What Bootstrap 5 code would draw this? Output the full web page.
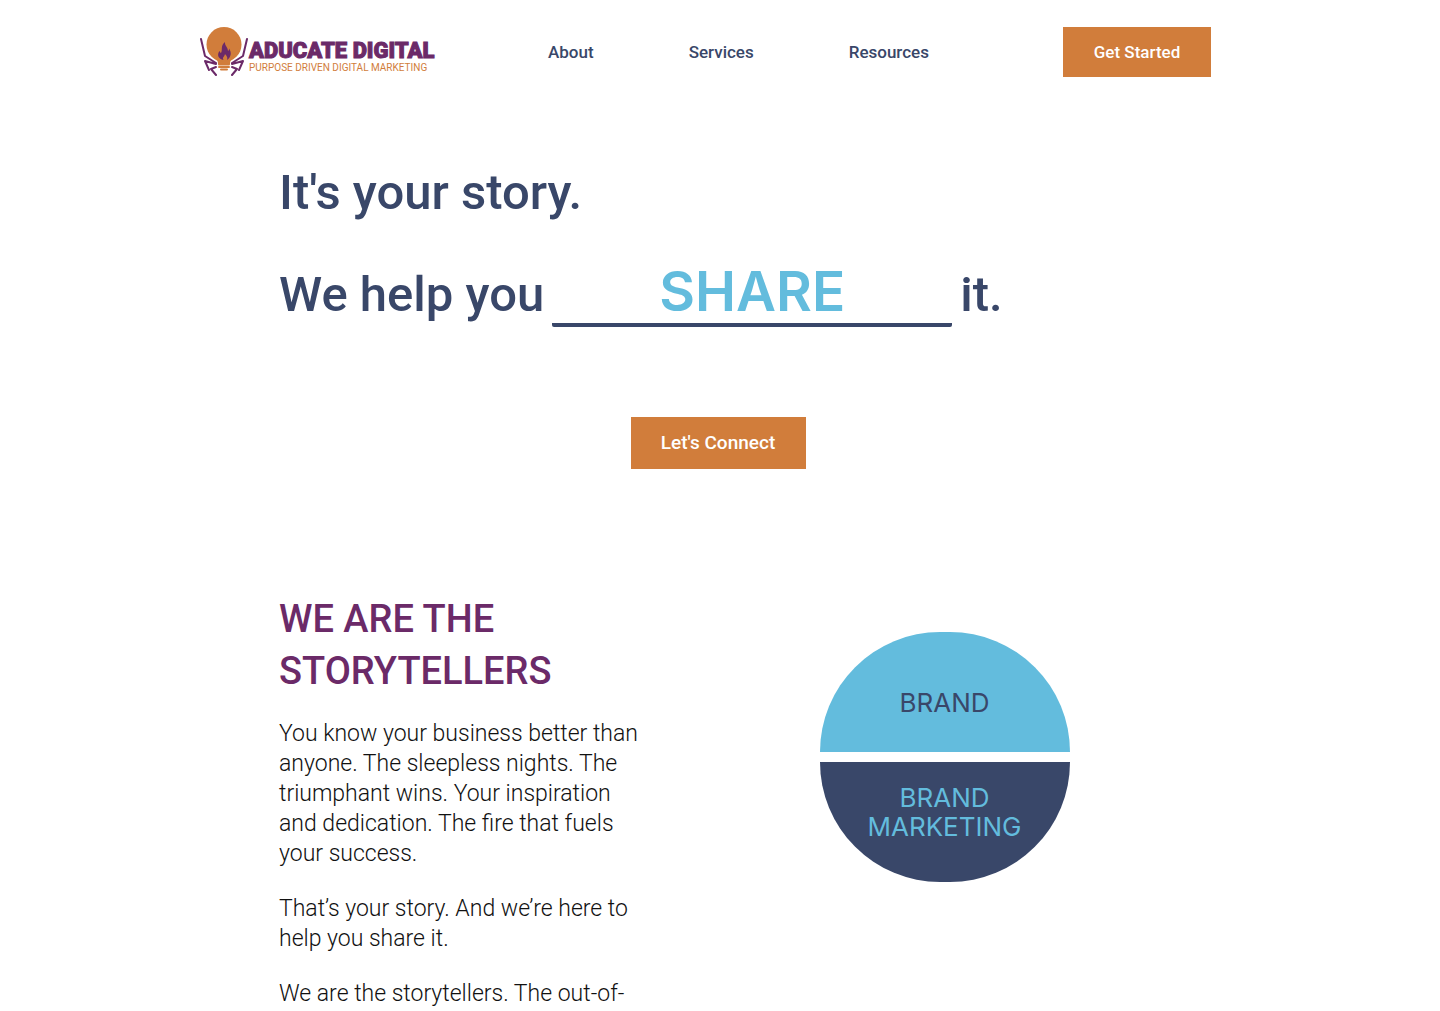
<!DOCTYPE html>
<html lang="en">
<head>
<meta charset="utf-8">
<meta name="viewport" content="width=device-width, initial-scale=1">
<title>Aducate Digital</title>
<link href="https://cdn.jsdelivr.net/npm/bootstrap@5.3.0/dist/css/bootstrap.min.css" rel="stylesheet">
<style>
:root { --navy: #394769; --plum: #6b2a68; --sky: #63bcdd; --copper: #d17d3b; }
body { font-family: Roboto, "Open Sans", sans-serif; color: #111; background: #fff; overflow-x: hidden; }
.site-head { max-width: 1040px; padding: 27px 29px 0 0; }
.site-head .brand-link { width: 238px; }
.brand-link svg { display: block; width: 100%; height: auto; }
.site-menu { gap: 95px; margin-right: 24px; }
.site-menu .nav-link { color: var(--navy); font-size: 17px; font-weight: 500; line-height: 24px; }
.btn-copper { --bs-btn-color: #fff; --bs-btn-bg: var(--copper); --bs-btn-border-width: 0; --bs-btn-hover-color: #fff; --bs-btn-hover-bg: #b96a2c; --bs-btn-border-radius: 0; --bs-btn-font-weight: 500; --bs-btn-padding-x: 30px; --bs-btn-padding-y: 13px; --bs-btn-line-height: 24px; }
.btn-head { --bs-btn-font-size: 17px; min-width: 148px; }
.btn-hero { --bs-btn-font-size: 19px; --bs-btn-padding-y: 14px; min-width: 175px; }
.page-wrap { max-width: 882px; }
.hero { padding-top: 84px; }
.hero h1 { color: var(--navy); font-size: 49px; font-weight: 500; line-height: 64px; }
.hero .fill-line { gap: 8px; margin-top: 36px; }
.fill-line .fill-text { padding-top: 2px; }
.blank { flex: 0 1 400px; border-bottom: 4px solid var(--navy); border-radius: 2px; height: 66px; line-height: 60px; color: var(--sky); font-family: Inter, sans-serif; font-size: 55px; font-weight: 600; }
.hero-action { padding: 90px 4px 124px 0; }
.story-title { color: var(--plum); font-size: 38px; font-weight: 500; line-height: 52px; margin-bottom: 22px; }
.story-copy p { font-size: 23px; font-weight: 300; line-height: 30px; margin-bottom: 25px; }
.story-copy { max-width: 370px; }
.half { width: 250px; height: 120px; font-family: Inter, sans-serif; font-size: 26px; line-height: 29px; }
.half-top { background: var(--sky); color: var(--navy); border-radius: 120px 120px 0 0; padding-top: 20px; }
.half-bottom { background: var(--navy); color: var(--sky); border-radius: 0 0 120px 120px; padding-bottom: 20px; }
.story-figure { gap: 10px; padding-top: 39px; }
</style>
</head>
<body>
<header class="site-head container-fluid d-flex align-items-center justify-content-between">
  <a href="#" class="brand-link" aria-label="Aducate Digital home">
    <svg viewBox="0 0 238 50" role="img" aria-label="Aducate Digital">
      <circle cx="24" cy="17.500" r="17.500" fill="#d17d3b"/>
      <path d="M14 29h20c-3 3-4 5-4 8H18c0-3-1-5-4-8z" fill="#d17d3b"/>
      <path d="M19 37.500h10M19 40h10M21 42.500h6" stroke="#d17d3b" stroke-width="2" stroke-linecap="round"/>
      <path d="M23.500 33c-5-1-7-5-4-9 1 1 .5 2 1.500 2 2-3-1-7 4-11-.5 4 3 5 3 9 1-.5 1-1.500 1-2.500 3 4 2 9-2 11.500 1-3-.5-4-2-6-.5 3-3 3-1.500 6z" fill="#6b2a68"/>
      <path d="M1 12l4 17 11 7M16 37L5 34l4 9M16 40l-5 2 5 6M47 12l-4 17-11 7M32 37l11-3-4 9M32 40l5 2-5 6" fill="none" stroke="#6b2a68" stroke-width="2" stroke-linecap="round" stroke-linejoin="round"/>
      <text x="49" y="31" font-family="Roboto, sans-serif" font-size="22" font-weight="900" fill="#6b2a68" stroke="#6b2a68" stroke-width="1">ADUCATE DIGITAL</text>
      <text x="49" y="44" font-family="Roboto, sans-serif" font-size="10" fill="#d17d3b">PURPOSE DRIVEN DIGITAL MARKETING</text>
    </svg>
  </a>
  <nav class="nav site-menu" aria-label="Main">
    <a class="nav-link p-0" href="#about">About</a>
    <a class="nav-link p-0" href="#services">Services</a>
    <a class="nav-link p-0" href="#resources">Resources</a>
  </nav>
  <button type="button" class="btn btn-copper btn-head px-0">Get Started</button>
</header>
<main class="page-wrap container-fluid p-0">
  <section class="hero">
    <h1 class="m-0">It's your story.
      <span class="fill-line d-flex align-items-center"><span class="fill-text">We help you</span><span class="blank text-center">SHARE</span><span class="fill-text">it.</span></span>
    </h1>
    <div class="hero-action text-center"><button type="button" class="btn btn-copper btn-hero px-0">Let's Connect</button></div>
  </section>
  <section class="row gx-3" id="about">
    <div class="col-6">
      <h2 class="story-title">WE ARE THE<br>STORYTELLERS</h2>
      <div class="story-copy">
        <p>You know your business better than anyone. The sleepless nights. The triumphant wins. Your inspiration and dedication. The fire that fuels your success.</p>
        <p>That’s your story. And we’re here to help you share it.</p>
        <p>We are the storytellers. The out-of-</p>
      </div>
    </div>
    <div class="col-6 story-figure d-flex flex-column align-items-center">
      <div class="half half-top d-flex align-items-center justify-content-center text-center">BRAND</div>
      <div class="half half-bottom d-flex align-items-center justify-content-center text-center">BRAND<br>MARKETING</div>
    </div>
  </section>
</main>
<script src="https://cdn.jsdelivr.net/npm/bootstrap@5.3.0/dist/js/bootstrap.bundle.min.js"></script>
</body>
</html>
